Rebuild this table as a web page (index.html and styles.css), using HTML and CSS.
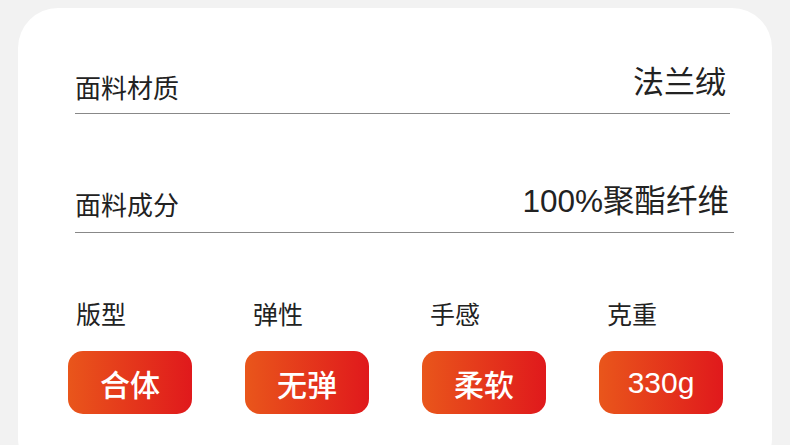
FILE: index.html
```
<!DOCTYPE html>
<html lang="zh">
<head>
<meta charset="utf-8">
<link rel="stylesheet" href="styles.css">
</head>
<body>
<div class="card">
  <div class="row row1">
    <span class="label">面料材质</span>
    <span class="value">法兰绒</span>
  </div>
  <div class="row row2">
    <span class="label">面料成分</span>
    <span class="value">100%聚酯纤维</span>
  </div>
  <div class="props">
    <div class="prop"><div class="plabel">版型</div><div class="badge">合体</div></div>
    <div class="prop"><div class="plabel">弹性</div><div class="badge">无弹</div></div>
    <div class="prop"><div class="plabel">手感</div><div class="badge">柔软</div></div>
    <div class="prop"><div class="plabel">克重</div><div class="badge">330g</div></div>
  </div>
</div>
</body>
</html>
```
FILE: styles.css
```
html, body {
  margin: 0;
  padding: 0;
  background: #f2f2f2;
  overflow: hidden;
}
body {
  width: 790px;
  height: 445px;
  font-family: "Liberation Sans", "Noto Sans CJK SC", sans-serif;
  color: #222;
}
.card {
  margin: 8px 0 0 18px;
  width: 754px;
  height: 470px;
  background: #fff;
  border-radius: 40px;
  box-sizing: border-box;
  padding-left: 57px;
  padding-top: 44px;
}
.row {
  display: flex;
  justify-content: space-between;
  align-items: flex-end;
  border-bottom: 1px solid #888;
  box-sizing: border-box;
}
.row1 {
  width: 655px;
  height: 62px;
  padding: 0 4px 11px 0;
}
.row2 {
  width: 659px;
  margin-top: 56px;
  height: 63px;
  padding: 0 5px 13px 0;
}
.label {
  font-size: 26px;
  line-height: 26px;
}
.row1 .value {
  font-size: 31px;
  line-height: 31px;
  margin-bottom: 4px;
}
.row2 .value {
  font-size: 31.5px;
  line-height: 31px;
  margin-bottom: 2px;
}
.props {
  display: grid;
  grid-template-columns: repeat(4, 124px);
  column-gap: 53px;
  margin-left: -7px;
  margin-top: 68px;
}
.plabel {
  font-size: 25px;
  line-height: 28px;
  padding-left: 8px;
}
.badge {
  margin-top: 22px;
  height: 63px;
  border-radius: 15px;
  background: linear-gradient(90deg, #e9561b 0%, #e0191c 100%);
  color: #fff;
  font-size: 30px;
  font-weight: 500;
  display: flex;
  align-items: center;
  justify-content: center;
}
```
